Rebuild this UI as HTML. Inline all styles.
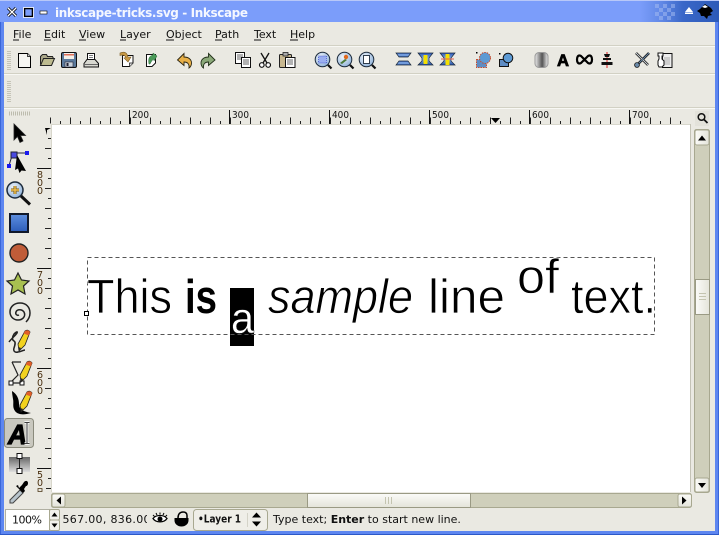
<!DOCTYPE html>
<html><head><meta charset="utf-8"><title>inkscape-tricks.svg - Inkscape</title>
<style>
html,body{margin:0;padding:0;background:#eae9e2;overflow:hidden}
svg{display:block}
.ui{font-family:"DejaVu Sans",sans-serif;font-size:11px;fill:#111}
.rl{font-family:"DejaVu Sans",sans-serif;font-size:10px;fill:#111}
.rv{font-family:"DejaVu Sans",sans-serif;font-size:9.5px;fill:#4a3010;text-anchor:middle}
.cv{font-family:"Liberation Sans",sans-serif;fill:#000}
.k{stroke:#000;stroke-width:1;fill:none}
</style></head>
<body>
<svg xmlns="http://www.w3.org/2000/svg" width="719" height="535" viewBox="0 0 719 535">
<defs>
<linearGradient id="tb" x1="0" x2="1" y1="0" y2="0"><stop offset="0" stop-color="#7b9dfa"/><stop offset=".89" stop-color="#7b9dfa"/><stop offset=".92" stop-color="#6188e6"/><stop offset=".95" stop-color="#3a67c8"/><stop offset="1" stop-color="#2c5ab8"/></linearGradient>
<linearGradient id="bl" x1="0" x2="0" y1="0" y2="1"><stop offset="0" stop-color="#2b55b5"/><stop offset=".5" stop-color="#8ab4ec"/><stop offset="1" stop-color="#2450a8"/></linearGradient>
<linearGradient id="bv" x1="0" x2="0" y1="0" y2="1"><stop offset="0" stop-color="#5e8fe0"/><stop offset="1" stop-color="#2c5cb8"/></linearGradient>
<radialGradient id="gl" cx=".4" cy=".35" r=".7"><stop offset="0" stop-color="#f2f6fb"/><stop offset="1" stop-color="#8cb0d8"/></radialGradient>
<linearGradient id="gr" x1="0" x2="1" y1="0" y2="0"><stop offset="0" stop-color="#eee"/><stop offset=".55" stop-color="#555"/><stop offset="1" stop-color="#eee"/></linearGradient>
<linearGradient id="gv" x1="0" x2="0" y1="0" y2="1"><stop offset="0" stop-color="#666"/><stop offset="1" stop-color="#ddd"/></linearGradient>
<linearGradient id="th" x1="0" x2="0" y1="0" y2="1"><stop offset="0" stop-color="#fbfbf8"/><stop offset="1" stop-color="#e4e4da"/></linearGradient>
<linearGradient id="tv" x1="0" x2="1" y1="0" y2="0"><stop offset="0" stop-color="#fbfbf8"/><stop offset="1" stop-color="#e4e4da"/></linearGradient>
<g id="pc"><path d="M0 0L-1-7 6-20Q9-22 11-19L6-6z" fill="#f2d21e" stroke="#222" stroke-width=".8"/><path d="M6-20Q9-22 11-19L10-15.500 4.500-17.500z" fill="#e0602a"/><path d="M0 0L-.7-4 2-3z" fill="#222"/></g>
</defs>

<!-- window frame -->
<rect width="719" height="535" fill="#5d86f0"/>
<rect x="0" y="0" width="719" height="22" fill="url(#tb)"/>
<rect x="0" y="0" width="719" height="1" fill="#b8c8f8"/>
<rect x="0" y="22" width="1" height="513" fill="#3a66d8"/>
<rect x="718" y="22" width="1" height="513" fill="#3a66d8"/>
<rect x="0" y="534" width="719" height="1" fill="#2c58c8"/>
<rect x="4" y="22" width="711" height="509" fill="#eae9e2"/>

<!-- title bar -->
<g fill="#a8bef2" opacity=".5"><rect x="655" y="4" width="4" height="4"/><rect x="663" y="4" width="4" height="4"/><rect x="671" y="4" width="4" height="4"/><rect x="659" y="8" width="4" height="4"/><rect x="667" y="8" width="4" height="4"/><rect x="655" y="12" width="4" height="4"/><rect x="663" y="12" width="4" height="4"/><rect x="671" y="12" width="4" height="4"/><rect x="659" y="16" width="4" height="4"/><rect x="667" y="16" width="4" height="4"/></g>
<path d="M8 8l8 8M16 8l-8 8" stroke="#000" stroke-width="3" fill="none"/><path d="M8 8l8 8M16 8l-8 8" stroke="#fff" stroke-width="1.300" fill="none"/>
<rect x="24.500" y="8.500" width="8" height="8" fill="#7b9dfa" stroke="#000" stroke-width="1.600"/><rect x="23.500" y="7.500" width="10" height="10" fill="none" stroke="#fff" stroke-width=".8"/>
<rect x="40" y="11" width="7" height="3" fill="#fff" stroke="#000" stroke-width=".6"/>
<text x="55" y="17" style="font-family:'DejaVu Sans',sans-serif;font-size:12px;font-weight:bold;fill:#f4f7ff" textLength="193" lengthAdjust="spacing">inkscape-tricks.svg - Inkscape</text>
<path d="M685 12l4-5 4 5z" fill="#fff"/><rect x="685" y="12.500" width="8" height="1.500" fill="#fff"/>
<path d="M705 4l6 4 2 3-3 2 2 2-4 1-1 3-3-3-3 0-1-3-3-2 3-2z" fill="#000"/><path d="M702 7l3-2 3 2-3 1z" fill="#fff"/>

<!-- menu -->
<g class="ui">
<text x="13" y="38">File</text><text x="44" y="38">Edit</text><text x="79" y="38">View</text><text x="120" y="38">Layer</text><text x="166" y="38">Object</text><text x="215" y="38">Path</text><text x="254" y="38">Text</text><text x="290" y="38">Help</text>
</g>
<path d="M13 40h6M44 40h7M79 40h7M120 40h6M166 40h8M215 40h7M254 40h7M290 40h8" stroke="#111" stroke-width="1"/>
<path d="M4 45.500h711M4 73.500h711M4 107.500h711" stroke="#d2d1c4" stroke-width="1"/>
<path d="M4 46.500h711M4 74.500h711M4 108.500h711" stroke="#f8f8f4" stroke-width="1"/>

<!-- grippers -->
<path d="M7 51.500h4M7 53.500h4M7 55.500h4M7 57.500h4M7 59.500h4M7 61.500h4M7 63.500h4M7 65.500h4M7 67.500h4M7 69.500h4M7 81.500h4M7 83.500h4M7 85.500h4M7 87.500h4M7 89.500h4M7 91.500h4M7 93.500h4M7 95.500h4M7 97.500h4M7 99.500h4M7 101.500h4" stroke="#c4c3b6"/>
<path d="M9 113.500H31" stroke="#bdbcae" stroke-width="4" stroke-dasharray="1 1"/>

<!-- command bar icons -->
<path d="M18.500 53.500h9l3 3v11h-12z" fill="#f6f6f2" stroke="#000"/><path d="M27.500 53.500v3h3" fill="#ccc" stroke="#000" stroke-width=".7"/>
<path d="M40.500 64.500l0-8 2-2h4l1 2h5l1 2" fill="#aba88a" stroke="#222"/><path d="M40.500 65.500l3-7h11l-3 7z" fill="#bdbb90" stroke="#222"/>
<rect x="61.500" y="52.500" width="15" height="15" rx="1.500" fill="#5b7a9c" stroke="#111"/><rect x="64" y="53" width="10" height="6" fill="#f4f0ea"/><rect x="64" y="54" width="10" height="1.500" fill="#e0705a"/><rect x="65" y="62" width="8" height="5" fill="#c8d2dc" stroke="#223" stroke-width=".6"/><rect x="66.500" y="63" width="2" height="3" fill="#223"/>
<path d="M87.500 53.500h7v6h-7z" fill="#fff" stroke="#111"/><path d="M89 55.500h4M89 57.500h4" stroke="#555" stroke-width=".8"/><path d="M87 59.500h8l3.500 4v3.500h-14.500v-3.500z" fill="#d8d8d0" stroke="#111"/><path d="M84 64.500h14" stroke="#666"/>
<!-- import -->
<path d="M122.500 55.500h10.500v7.500l-3.500 3.500h-7z" fill="#fff" stroke="#111"/><path d="M120 53c5-2 7 0 8 4l3 0-3 5-4-4 2-.5c-1-2-3-3-6-2z" fill="#c89a48" stroke="#7a5a20" stroke-width=".6"/><path d="M129.500 66.500v-3.500h3.500" fill="#ddd" stroke="#111" stroke-width=".7"/>
<!-- export -->
<path d="M146.500 54.500h9v8.500l-3.500 3.500h-5.500z" fill="#fff" stroke="#111"/><path d="M149 64c-1-5 0-8 4-9v-2l4 3-3 5v-2c-2 1-3 3-4 5z" fill="#4a9a58" stroke="#2c6a38" stroke-width=".5"/>
<!-- undo/redo -->
<path d="M177.500 60l6.500-6.500v3.500c4 0 7.500 2 7.500 6 0 2.500-1 4-2.500 5 .5-4-1.500-6-5-6v3.500z" fill="#e8b048" stroke="#2a2410" stroke-width=".9"/>
<path d="M215 60l-6.500-6.500v3.500c-4 0-7.500 2-7.500 6 0 2.500 1 4 2.500 5-.5-4 1.500-6 5-6v3.500z" fill="#8aa878" stroke="#22301a" stroke-width=".9"/>
<!-- duplicate -->
<rect x="235.500" y="52.500" width="9" height="11" fill="#fff" stroke="#111"/><path d="M237 55h6M237 57h6M237 59h6" stroke="#333" stroke-width=".8"/><rect x="241.500" y="57.500" width="9" height="10" fill="#fff" stroke="#111"/><path d="M243 60h6M243 62h6M243 64h6" stroke="#333" stroke-width=".8"/>
<!-- cut -->
<path d="M261 53l6 10M269 53l-6 10" stroke="#111" stroke-width="1.300" fill="none"/><circle cx="261.800" cy="65" r="2.300" fill="#fff" stroke="#111" stroke-width="1.200"/><circle cx="268.200" cy="65" r="2.300" fill="#fff" stroke="#111" stroke-width="1.200"/>
<!-- paste -->
<rect x="279.500" y="54.500" width="12" height="13" rx="1" fill="#c8b890" stroke="#222"/><rect x="283" y="52.500" width="5" height="3.500" fill="#aaa" stroke="#222" stroke-width=".8"/><rect x="285.500" y="57.500" width="9.500" height="10" fill="#fff" stroke="#111"/><path d="M287 60h6M287 62h6M287 64h6" stroke="#333" stroke-width=".8"/>
<!-- zoom icons -->
<g stroke="#1c2a3a"><circle cx="322.500" cy="59.500" r="7.300" fill="url(#gl)"/><path d="M328 65l3.500 3.500" stroke="#111" stroke-width="2.200"/><rect x="318.500" y="56" width="8" height="7" fill="#9aaef0" stroke="#3344cc" stroke-width=".7" stroke-dasharray="1 1"/>
<circle cx="344.500" cy="59.500" r="7.300" fill="url(#gl)"/><path d="M350 65l3.500 3.500" stroke="#111" stroke-width="2.200"/><path d="M340 63l5-4 2 1-5 4z" fill="#4a7a3a" stroke="none"/><circle cx="346" cy="57" r="2.200" fill="#e06a20" stroke="none"/>
<circle cx="366.500" cy="59.500" r="7.300" fill="url(#gl)"/><path d="M372 65l3.500 3.500" stroke="#111" stroke-width="2.200"/><rect x="363.500" y="55.500" width="6" height="8" fill="#fff" stroke-width=".9"/></g>
<!-- dist -->
<g stroke="#1c2a3a" stroke-width=".7">
<path d="M396 53h15l-3 4h-9z" fill="url(#bl)"/><path d="M399 61h9l3 4h-15z" fill="url(#bl)"/>
<path d="M418 53h15l-4 5v3l4 4h-15l4-4v-3z" fill="url(#bl)"/><rect x="423.500" y="55" width="4" height="9" fill="#f4e000" stroke="none"/>
<path d="M440 53h15l-4 5v3l4 4h-15l4-4v-3z" fill="url(#bl)"/><rect x="445.500" y="54" width="4" height="11" fill="#f4e000" stroke="none"/><path d="M441 59h13" stroke="#e8604a" stroke-width="1"/>
</g>
<!-- group -->
<rect x="476.500" y="59.500" width="10" height="8" fill="#5d8cc4" stroke="#c84a2a" stroke-dasharray="1.500 1"/><circle cx="485" cy="58" r="5.500" fill="#5d9ad4" stroke="#c84a2a" stroke-dasharray="1.500 1"/><rect x="476" y="52" width="1.500" height="1.500" fill="#000"/>
<rect x="499.500" y="59.500" width="9" height="7" fill="#5d8cc4" stroke="#111"/><circle cx="508" cy="58" r="4.800" fill="#5d9ad4" stroke="#111"/><rect x="499" y="53" width="1.500" height="1.500" fill="#000"/>
<!-- gradient, text, link, align -->
<rect x="535" y="52.500" width="13" height="15" rx="4" fill="url(#gr)" stroke="#999"/>
<text x="557" y="66" style="font-family:'Liberation Sans',sans-serif;font-size:17px;font-weight:bold;fill:#000;stroke:#000;stroke-width:.8" textLength="12" lengthAdjust="spacingAndGlyphs">A</text>
<path d="M581 56c-3-1.500-4 1-4 3.500s1 5 4 3.500l7-7c3-1.500 4 1 4 3.500s-1 5-4 3.500z" fill="none" stroke="#000" stroke-width="2.200"/>
<path d="M607 52v16" stroke="#e02020"/><path d="M604 54h6l-1 3h-4zM603 58h8v2h-8zM601.500 62h11v3h-11z" fill="#111"/>
<!-- prefs -->
<path d="M636 53l12 12M649 53l-11 11" stroke="#111" stroke-width="2.600" fill="none"/><path d="M636 53l12 12" stroke="#cfd6dc" stroke-width="1" fill="none"/><path d="M649 53l-11 11" stroke="#6a8aa8" stroke-width="1" fill="none"/><circle cx="637" cy="65" r="2.400" fill="#6a8aa8" stroke="#111" stroke-width=".8"/>
<rect x="662.500" y="53.500" width="9.500" height="14" fill="#eee" stroke="#111"/><path d="M664 58h6M664 60h6M664 62h6M664 64h6" stroke="#999" stroke-width=".8"/>
<path d="M658 53h5v3h-1v3l2 2v4l-2 2h-3l-1-2v-4l1-2v-3h-1z" fill="#fff" stroke="#111"/>

<!-- horizontal ruler -->
<path d="M60 122.500H690" stroke="#222" stroke-width="3" stroke-dasharray="1 9"/>
<path d="M50 120.500H690" stroke="#222" stroke-width="6" stroke-dasharray="1 19"/>
<path d="M129.500 110v14M229.500 110v14M329.500 110v14M429.500 110v14M529.500 110v14M629.500 110v14" stroke="#111" stroke-width="1"/>
<g class="rl"><text x="132" y="118" textLength="17" lengthAdjust="spacingAndGlyphs">200</text><text x="232" y="118" textLength="17" lengthAdjust="spacingAndGlyphs">300</text><text x="332" y="118" textLength="17" lengthAdjust="spacingAndGlyphs">400</text><text x="432" y="118" textLength="17" lengthAdjust="spacingAndGlyphs">500</text><text x="532" y="118" textLength="17" lengthAdjust="spacingAndGlyphs">600</text><text x="632" y="118" textLength="17" lengthAdjust="spacingAndGlyphs">700</text></g>
<path d="M491 118h9l-4.500 5z" fill="#000"/>
<rect x="695" y="111" width="14" height="15" fill="#e3e2da"/>
<circle cx="701.500" cy="117" r="3.300" fill="none" stroke="#111" stroke-width="1.500"/><path d="M704 119.500l3.500 3.500" stroke="#111" stroke-width="1.800"/>

<!-- vertical ruler -->
<path d="M49.500 128V491" stroke="#222" stroke-width="3" stroke-dasharray="1 9"/>
<path d="M48 128V491" stroke="#222" stroke-width="6" stroke-dasharray="1 19"/>
<path d="M37 168.500h14M37 268.500h14M37 368.500h14M37 468.500h14" stroke="#111"/>
<rect x="44" y="125" width="7" height="11" fill="#eae9e2"/><path d="M45 128h6l-4 2v5z" fill="#000"/>
<g class="rv"><text x="40" y="178">8</text><text x="40" y="186">0</text><text x="40" y="194">0</text><text x="40" y="278">7</text><text x="40" y="286">0</text><text x="40" y="294">0</text><text x="40" y="378">6</text><text x="40" y="386">0</text><text x="40" y="394">0</text><text x="40" y="478">5</text><text x="40" y="486">0</text></g>
<rect x="36" y="488" width="10" height="4" fill="#eae9e2"/><path d="M38 488.500h4v3h-4z" fill="none" stroke="#4a3414" stroke-width=".8"/>

<!-- canvas -->
<rect x="51" y="124" width="640" height="368" fill="#fff"/>
<path d="M51.500 124v368M51 124.500h640" stroke="#d8d7cc"/>
<rect x="690" y="124" width="1" height="368" fill="#c4c3b6"/>
<rect x="230" y="288" width="24" height="58" fill="#000"/>
<rect x="87.500" y="257.500" width="567" height="77" fill="none" stroke="#555" stroke-dasharray="4 3"/>
<rect x="84.500" y="311.500" width="4" height="4" fill="#fff" stroke="#000"/>
<g class="cv" font-size="48" stroke="#fff" stroke-width=".7">
<text x="87" y="313" textLength="85" lengthAdjust="spacingAndGlyphs">This</text>
<text x="428" y="313" textLength="77" lengthAdjust="spacingAndGlyphs">line</text>
<text x="571" y="313" textLength="85" lengthAdjust="spacingAndGlyphs">text.</text>
<text x="517" y="293" textLength="42" lengthAdjust="spacingAndGlyphs">of</text>
<text x="268" y="313" textLength="145" lengthAdjust="spacingAndGlyphs" font-style="italic">sample</text>
</g>
<text class="cv" x="185" y="313" font-size="47" font-weight="bold" textLength="32" lengthAdjust="spacingAndGlyphs">is</text>
<text x="231" y="333" font-family="'Liberation Sans',sans-serif" font-size="44" fill="#fff" stroke="#000" stroke-width=".4" textLength="23" lengthAdjust="spacingAndGlyphs">a</text>

<!-- vertical scrollbar -->
<rect x="694.500" y="129.500" width="15" height="363" rx="2" fill="#cfcfbb" stroke="#a8a890"/>
<rect x="695" y="130" width="14" height="15" rx="2" fill="url(#tv)" stroke="#a8a890"/><path d="M698 140.500h8l-4-5z" fill="#000"/>
<rect x="695" y="478" width="14" height="14" rx="2" fill="url(#tv)" stroke="#a8a890"/><path d="M698 483h8l-4 5z" fill="#000"/>
<rect x="695.500" y="279.500" width="14" height="35" fill="url(#tv)" stroke="#9a9a84"/><path d="M699 293.500h7M699 296.500h7M699 299.500h7" stroke="#c4c4b0"/>

<!-- horizontal scrollbar -->
<rect x="51.500" y="493.500" width="640" height="14" rx="2" fill="#cfcfbb" stroke="#a8a890"/>
<rect x="52" y="494" width="13" height="13" rx="2" fill="url(#th)" stroke="#a8a890"/><path d="M61 496.500v8l-4.500-4z" fill="#000"/>
<rect x="678" y="494" width="13.500" height="13" rx="2" fill="url(#th)" stroke="#a8a890"/><path d="M682 496.500v8l4.500-4z" fill="#000"/>
<rect x="307.500" y="493.500" width="163" height="14" fill="url(#th)" stroke="#9a9a84"/><path d="M385.500 497v7M388.500 497v7M391.500 497v7" stroke="#c4c4b0"/>

<!-- left toolbox -->
<path d="M14 124l0 16 3.500-3.500 2.500 6 3-1.500-2.500-5.500h5z" fill="#000" stroke="#222" stroke-width=".8"/>
<path d="M9 166c2-8 4-12 5-13h13" fill="none" stroke="#224" stroke-width="1"/><rect x="11" y="152" width="6" height="6" fill="#4a4ae0" stroke="#223"/><rect x="25" y="151" width="4" height="4" fill="#1a1aee"/><rect x="7" y="164" width="4" height="4" fill="#1a1aee"/>
<path d="M17 155l9 16-4.500-.5-2 2.500-1.500-4.500-3 1.500z" fill="#000"/>
<circle cx="15" cy="190" r="8" fill="url(#gl)" stroke="#1c2a3a" stroke-width="1.500"/><path d="M21 196l9 8.500" stroke="#111" stroke-width="3"/><path d="M11 190h8M15 186v8" stroke="#7a5a14" stroke-width="3"/><path d="M11 190h8M15 186v8" stroke="#f0c050" stroke-width="1.400"/>
<rect x="10" y="214" width="18" height="18" fill="url(#bv)" stroke="#10182a" stroke-width="2"/>
<circle cx="19" cy="253" r="9" fill="#c05c38" stroke="#222" stroke-width="1.400"/>
<path d="M18 273l3.500 7 7.500 1-5.500 5 1.500 8-7-4-7 4 1.500-8-5.500-5 7.500-1z" fill="#a8c050" stroke="#222" stroke-width="1.200"/>
<path d="M19 315c-2 1-4-1-3-3 1-3 6-3 8 0 2 4-1 8-6 8-5 0-8-4-8-8 0-6 5-9 10-9 6 0 10 4 10 10 0 4-2 7-4 9" fill="none" stroke="#222" stroke-width="1.500"/>
<path d="M9 342c2-3 7-7 8-9 1-2-1-1-3 1-2 3-2 6 0 7 2 1 1 4 0 7s1 5 4 4c3 0 5-2 7-2" fill="none" stroke="#222" stroke-width="1.500"/>
<use href="#pc" x="19" y="351"/>
<path d="M12 362h9M12 362l6 13-7 7M12 383h10" fill="none" stroke="#222" stroke-width="1.200"/><rect x="9" y="381" width="4" height="4" fill="#fff" stroke="#111"/><rect x="20" y="381" width="4" height="4" fill="#fff" stroke="#111"/>
<use href="#pc" x="21" y="382"/>
<path d="M12 391C17 394 19 399 19 404 19 408 21 411 31 413 24 415 18 415 15 411 12 407 14 403 13 399 12.500 396 12 393 12 391z" fill="#000"/>
<use href="#pc" x="21" y="412"/>
<rect x="4.500" y="418.500" width="29" height="29" rx="3" fill="#c9c8bf" stroke="#8a8a7c"/>
<text x="8" y="444" style="font-family:'Liberation Sans',sans-serif;font-size:28px;font-weight:bold;font-style:italic;fill:#000;stroke:#000;stroke-width:1.200" textLength="19" lengthAdjust="spacingAndGlyphs">A</text>
<path d="M24.500 422.500h5M24.500 443.500h5M27 423v20" stroke="#fff" stroke-width="2.500"/><path d="M24.500 422.500h5M24.500 443.500h5M27 423v20" stroke="#000" stroke-width=".8"/>
<rect x="9" y="457" width="21" height="15" fill="url(#gv)"/><path d="M19.500 456v14" stroke="#222"/><rect x="17" y="453.500" width="5" height="5" fill="#fff" stroke="#111"/><rect x="17" y="468.500" width="5" height="5" fill="#fff" stroke="#111"/>
<path d="M11 503l-1 0 0-3 10-10 3 3-10 10z" fill="#b8c4cc" stroke="#444"/><path d="M19 488l3-3 2-3c2-2 4-1 4 1s-1 3-2 3l-2 3 1 2-2 2-7-7 2-1z" fill="#000"/>

<!-- status bar -->
<rect x="5.500" y="509.500" width="44" height="21" fill="#fff" stroke="#b0afa2"/>
<text class="ui" x="12" y="523.500" textLength="30">100%</text>
<rect x="49.500" y="509.500" width="10" height="10.500" rx="1.500" fill="#f2f1ec" stroke="#a8a890"/><rect x="49.500" y="520" width="10" height="10.500" rx="1.500" fill="#f2f1ec" stroke="#a8a890"/>
<path d="M51.500 516.500h6l-3-4zM51.500 523.500h6l-3 4z" fill="#000"/>
<svg x="62" y="510" width="85" height="18" viewBox="0 0 85 18"><text class="ui" x="0.500" y="13" textLength="88" lengthAdjust="spacing">567.00, 836.00</text></svg>
<path d="M153 518.500c3-4 11-4 14 0-3 4.500-11 4.500-14 0z" fill="#fff" stroke="#000" stroke-width="1.300"/><circle cx="160" cy="519" r="2.500" fill="#000"/>
<path d="M153 515l1.500 1.500M156 513l1 2M160 512.500v2M164 513l-1 2M167 515l-1.500 1.500" stroke="#000"/>
<path d="M174.500 518h14v2.500a7 6 0 0 1-14 0z" fill="#000"/><path d="M178 518c0-4 2-6 5-6s4 1.500 4 3.500v2.500" fill="none" stroke="#000" stroke-width="1.500"/>
<rect x="193.500" y="509.500" width="74" height="21" rx="3" fill="#efeee8" stroke="#a8a890"/>
<text x="198" y="522.500" style="font-family:'DejaVu Sans',sans-serif;font-size:10.500px;font-weight:bold;fill:#111" textLength="43" lengthAdjust="spacingAndGlyphs">•Layer 1</text>
<path d="M247.500 513v14" stroke="#d4d3c8"/>
<path d="M252 517.500h9l-4.500-5zM252 521.500h9l-4.500 5z" fill="#000"/>
<text class="ui" x="273" y="523"><tspan>Type text; </tspan><tspan font-weight="bold">Enter</tspan><tspan> to start new line.</tspan></text>
</svg>
</body></html>
